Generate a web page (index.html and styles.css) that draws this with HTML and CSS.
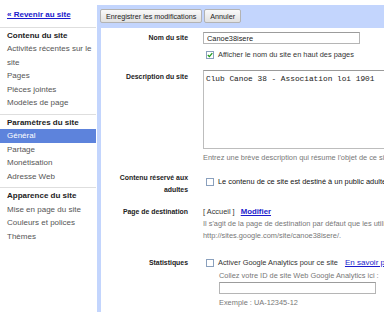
FILE: index.html
```html
<!DOCTYPE html>
<html lang="fr">
<head>
    <meta charset="UTF-8">
    <title>Paramètres du site - Général</title>
    <link rel="stylesheet" href="styles.css">
</head>
<body>
    <div class="page">
        <nav class="sidebar">
            <div class="nav-section back">
                <a href="#">« Revenir au site</a>
            </div>
            <div class="nav-section">
                <div class="nav-head">Contenu du site</div>
                <div class="nav-item">Activités récentes sur le site</div>
                <div class="nav-item">Pages</div>
                <div class="nav-item">Pièces jointes</div>
                <div class="nav-item">Modèles de page</div>
            </div>
            <div class="nav-section">
                <div class="nav-head">Paramètres du site</div>
                <div class="nav-item selected">Général</div>
                <div class="nav-item">Partage</div>
                <div class="nav-item">Monétisation</div>
                <div class="nav-item">Adresse Web</div>
            </div>
            <div class="nav-section last">
                <div class="nav-head">Apparence du site</div>
                <div class="nav-item">Mise en page du site</div>
                <div class="nav-item">Couleurs et polices</div>
                <div class="nav-item">Thèmes</div>
            </div>
        </nav>

        <div class="main">
            <div class="toolbar">
                <button class="btn">Enregistrer les modifications</button>
                <button class="btn">Annuler</button>
            </div>

            <div class="panel">
                <div class="row row-name">
                    <div class="label">Nom du site</div>
                    <div class="field">
                        <input class="text-input" type="text" value="Canoe38isere">
                        <div class="check-line show-name">
                            <span class="box checked">
                                <svg width="6" height="6" viewBox="0 0 6 6"><path d="M0.8 3 L2.4 4.6 L5.3 1.2" fill="none" stroke="#1e9a1e" stroke-width="1.3"/></svg>
                            </span>
                            <span>Afficher le nom du site en haut des pages</span>
                        </div>
                    </div>
                </div>

                <div class="row row-desc">
                    <div class="label">Description du site</div>
                    <div class="field">
                        <textarea class="desc" rows="7">Club Canoe 38 - Association loi 1901</textarea>
                        <div class="hint">Entrez une brève description qui résume l'objet de ce site.</div>
                    </div>
                </div>

                <div class="row row-adult">
                    <div class="label">Contenu réservé aux adultes</div>
                    <div class="field">
                        <div class="check-line">
                            <span class="box"></span>
                            <span class="dark">Le contenu de ce site est destiné à un public adulte.</span>
                        </div>
                    </div>
                </div>

                <div class="row row-landing">
                    <div class="label">Page de destination</div>
                    <div class="field">
                        <div class="landing">[ Accueil ] <a href="#" class="edit-link">Modifier</a></div>
                        <div class="note">Il s'agit de la page de destination par défaut que les utilisateurs voient</div>
                        <div class="note">http://sites.google.com/site/canoe38isere/.</div>
                    </div>
                </div>

                <div class="row row-stats">
                    <div class="label">Statistiques</div>
                    <div class="field">
                        <div class="check-line">
                            <span class="box"></span>
                            <span>Activer Google Analytics pour ce site</span>
                            <a href="#" class="more-link">En savoir plus</a>
                        </div>
                        <div class="sub">
                            <div class="hint">Collez votre ID de site Web Google Analytics ici :</div>
                            <input class="text-input" type="text" value="">
                            <div class="hint example">Exemple : UA-12345-12</div>
                        </div>
                    </div>
                </div>
            </div>
        </div>
    </div>
</body>
</html>
```

FILE: styles.css
```css
html, body { margin: 0; overflow: hidden; }
body { font-family: "Liberation Sans", Arial, sans-serif; font-size: 8px; color: #333; background: #fff; width: 384px; height: 312px; }
.page { display: flex; height: 312px; }

/* colonne de gauche */
.sidebar { width: 96px; flex: none; margin-right: 1px; padding-top: 8px; line-height: 13.5px; }
.nav-section { border-bottom: 1px solid #dedede; padding: 1px 0 4px; }
.nav-section.back { padding: 0 0 5px 7px; }
.nav-section.last { border-bottom: none; }
.nav-section a { color: #1a1acc; font-weight: bold; }
.nav-head { padding-left: 7px; font-weight: bold; color: #222; }
.nav-item { padding-left: 7px; color: #555; }
.nav-item.selected { background: #5d83dc; color: #fff; }

/* zone principale */
.main { flex: 1; min-width: 0; margin-top: 5px; background: #c3d5fd; padding-left: 4px; display: flex; flex-direction: column; }
.toolbar { display: flex; gap: 2px; padding: 4px 0 5px; margin-left: -1px; }
.btn { font-family: "Liberation Sans", Arial, sans-serif; font-size: 7.2px; height: 14px; padding: 0 5px; border: 1px solid #b3b3b3; border-radius: 2px; background: linear-gradient(#f9f9f9, #e1e1e1); color: #222; }
.panel { flex: 1; background: #fff; padding-top: 4px; overflow: hidden; }

.row { display: grid; grid-template-columns: 87px 1fr; column-gap: 15px; }
.label { text-align: right; font-weight: bold; font-size: 6.9px; line-height: 12px; color: #222; }
.field { font-size: 7.4px; line-height: 12px; white-space: nowrap; min-width: 0; }

.text-input { display: block; box-sizing: border-box; width: 157px; height: 12px; margin: 0; padding: 0 3px; border: 1px solid #b5b5b5; border-top-color: #9c9c9c; font-family: "Liberation Sans", Arial, sans-serif; font-size: 7.4px; color: #222; }
.check-line { display: flex; align-items: center; gap: 4px; height: 12px; padding-left: 3px; }
.show-name { margin-top: 5px; }
.box { width: 8px; height: 8px; box-sizing: border-box; border: 1px solid #8aa0bd; background: #fff; display: flex; align-items: center; justify-content: center; flex: none; }
.dark { color: #111; }
.more-link { color: #1a1acc; margin-left: 3px; font-size: 8px; }

.row-desc { margin-top: 9px; }
.row-desc .label { padding-top: 1px; }
.desc { display: block; box-sizing: border-box; width: 200px; height: 79px; margin: 0; padding: 3px 2px; border: 1px solid #bdbdbd; border-top-color: #9a9a9a; resize: none; font-family: "Liberation Mono", "Courier New", monospace; font-size: 7.8px; line-height: 10px; color: #222; }
.hint { margin-top: 3px; color: #777; }

.row-adult { margin-top: 8px; }
.row-adult .label { line-height: 12px; }
.row-adult .field { padding-top: 4px; }

.row-landing { margin-top: 10px; }
.landing { color: #333; }
.edit-link { color: #1a1acc; font-weight: bold; margin-left: 4px; font-size: 7.8px; }
.note { color: #777; line-height: 11.5px; }
.note:first-of-type { margin-top: 1.5px; }

.row-stats { margin-top: 15.5px; }
.sub { padding-left: 16px; }
.sub .hint { margin-top: 1px; }
.sub .text-input { height: 12px; }
.sub .example { margin-top: 3px; }
```
